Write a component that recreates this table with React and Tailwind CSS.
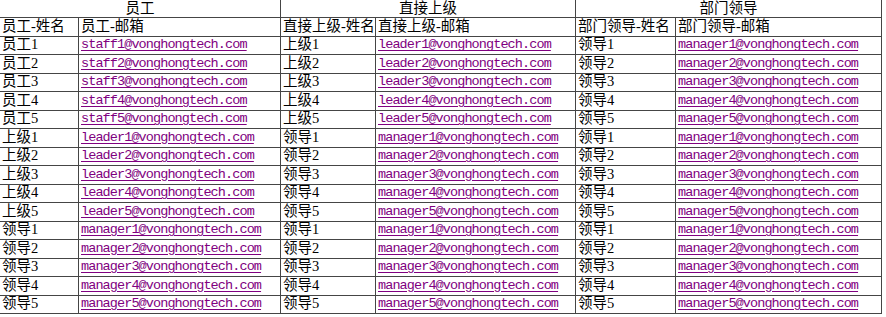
import React from "react";

const cols = ["w-[79px]", "w-[202px]", "w-[95px]", "w-[200px]", "w-[100px]", "w-[206px]"];

const nums = [1, 2, 3, 4, 5];

// each block of five rows: [name, email prefix] x 3 groups
const blocks = [
  [["员工", "staff"], ["上级", "leader"], ["领导", "manager"]],
  [["上级", "leader"], ["领导", "manager"], ["领导", "manager"]],
  [["领导", "manager"], ["领导", "manager"], ["领导", "manager"]],
];

const rows = blocks.flatMap((b) =>
  nums.map((n) => b.flatMap(([name, mail]) => [name + n, `${mail}${n}@vonghongtech.com`]))
);

const cjk = { fontFamily: '"Liberation Serif", "Noto Sans CJK SC", serif' };
const mono = { fontFamily: '"Liberation Mono", "Noto Sans CJK SC", monospace' };

const Cell = ({ i, children, email }) => (
  <div
    className={`${cols[i]} shrink-0 h-full border-r border-[#454545] overflow-hidden whitespace-nowrap flex items-end pl-[2px] pb-[1px] ${
      email ? "text-[13.5px] tracking-[-0.9px] text-[#800080] underline underline-offset-2" : "text-[14.5px] text-black"
    }`}
    style={email ? mono : cjk}
  >
    <span className="leading-[17px]">{children}</span>
  </div>
);

export default function App() {
  const headers = ["员工-姓名", "员工-邮箱", "直接上级-姓名", "直接上级-邮箱", "部门领导-姓名", "部门领导-邮箱"];
  return (
    <div className="w-[886px] h-[317px] bg-white overflow-hidden">
      <div className="w-[882px]">
        <div className="flex h-[18.47px] border-b border-[#454545]" style={cjk}>
          <div className="w-[281px] border-r border-[#454545] flex items-end justify-center text-[14.5px] leading-[17px]">员工</div>
          <div className="w-[295px] border-r border-[#454545] flex items-end justify-center text-[14.5px] leading-[17px]">直接上级</div>
          <div className="w-[306px] border-r border-[#454545] flex items-end justify-center text-[14.5px] leading-[17px]">部门领导</div>
        </div>
        <div className="flex h-[18.47px] border-b border-[#454545]">
          {headers.map((h, i) => (
            <Cell key={i} i={i}>{h}</Cell>
          ))}
        </div>
        {rows.map((r, ri) => (
          <div key={ri} className="flex h-[18.47px] border-b border-[#454545]">
            {r.map((c, i) => (
              <Cell key={i} i={i} email={i % 2 === 1}>{c}</Cell>
            ))}
          </div>
        ))}
      </div>
    </div>
  );
}
